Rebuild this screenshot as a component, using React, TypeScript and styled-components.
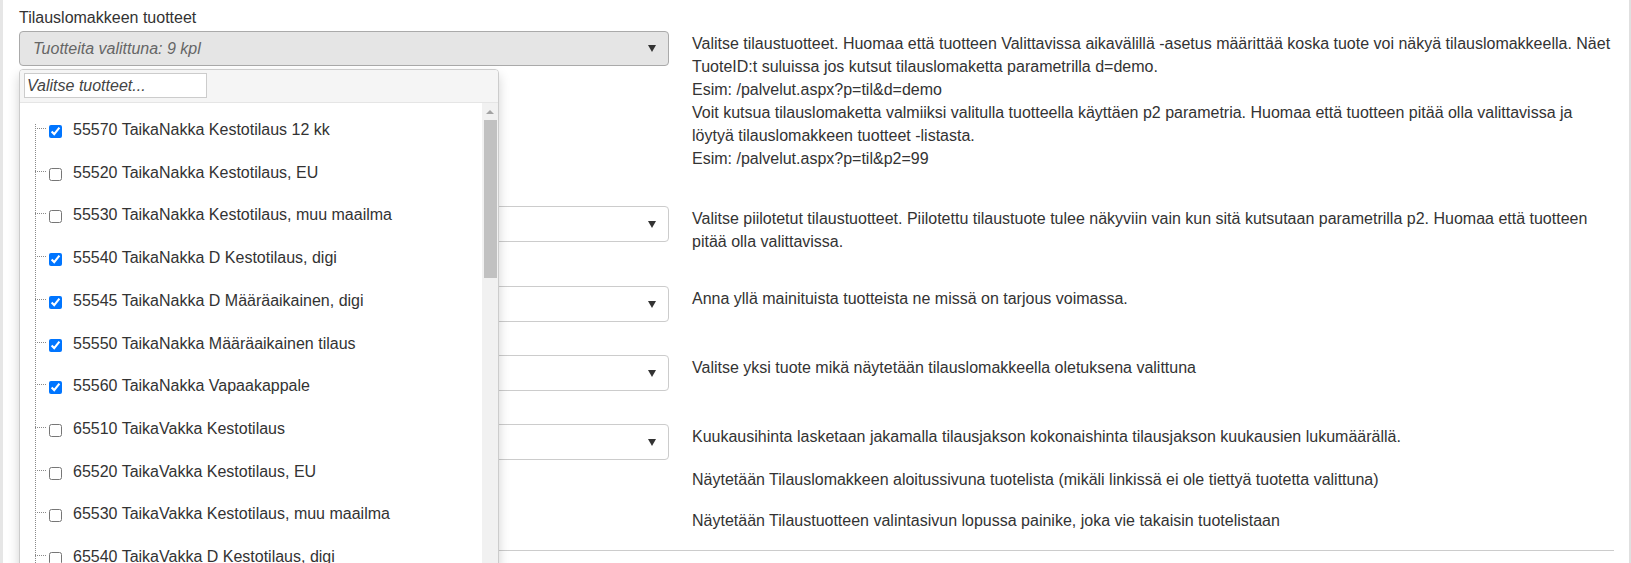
import React from 'react';
import styled, { createGlobalStyle } from 'styled-components';

const GlobalStyle = createGlobalStyle`
  html, body {
    margin: 0;
    padding: 0;
    overflow: hidden;
    background: #fff;
  }
  body {
    font-family: 'Liberation Sans', Arial, sans-serif;
    font-size: 16px;
    color: #333;
  }
  * { box-sizing: border-box; }
`;

type Product = {
  id: string;
  name: string;
  checked?: boolean;
};

const products: Product[] = [
  { id: '55570', name: 'TaikaNakka Kestotilaus 12 kk', checked: true },
  { id: '55520', name: 'TaikaNakka Kestotilaus, EU' },
  { id: '55530', name: 'TaikaNakka Kestotilaus, muu maailma' },
  { id: '55540', name: 'TaikaNakka D Kestotilaus, digi', checked: true },
  { id: '55545', name: 'TaikaNakka D Määräaikainen, digi', checked: true },
  { id: '55550', name: 'TaikaNakka Määräaikainen tilaus', checked: true },
  { id: '55560', name: 'TaikaNakka Vapaakappale', checked: true },
  { id: '65510', name: 'TaikaVakka Kestotilaus' },
  { id: '65520', name: 'TaikaVakka Kestotilaus, EU' },
  { id: '65530', name: 'TaikaVakka Kestotilaus, muu maailma' },
  { id: '65540', name: 'TaikaVakka D Kestotilaus, digi' },
];

const Page = styled.div`
  min-height: 563px;
  border-left: 3px solid #e6e6e6;
  border-right: 2px solid #e0e0e0;
  padding: 6px 15px 0 16px;
`;

const Row = styled.div<{ $space?: number }>`
  display: grid;
  grid-template-columns: 650px 1fr;
  column-gap: 23px;
  align-items: start;
  margin-bottom: ${p => p.$space ?? 8}px;
`;

const Field = styled.div`
  position: relative;
`;

const Label = styled.label`
  display: block;
  min-height: 23px;
  line-height: 23px;
  margin-bottom: 2px;
`;

const CheckLabel = styled.label`
  display: flex;
  align-items: center;
  height: 23px;
`;

const Select = styled.div<{ $open?: boolean }>`
  display: flex;
  align-items: center;
  justify-content: space-between;
  height: ${p => (p.$open ? 35 : 36)}px;
  padding: 0 12px 0 13px;
  border: 1px solid ${p => (p.$open ? '#aaa' : '#ccc')};
  border-radius: 4px;
  background: ${p => (p.$open ? '#e5e5e5' : '#fff')};
`;

const Placeholder = styled.span`
  font-style: italic;
  color: #666;
`;

const Caret = styled.span`
  width: 0;
  height: 0;
  border-left: 4px solid transparent;
  border-right: 4px solid transparent;
  border-top: 7px solid #333;
`;

const Desc = styled.div<{ $offset?: boolean }>`
  padding-top: ${p => (p.$offset ? 26 : 0)}px;
  line-height: 23px;
`;

const Divider = styled.hr`
  margin: 8px 0 0;
  border: 0;
  border-top: 1px solid #ccc;
`;

const Dropdown = styled.div`
  position: absolute;
  top: calc(100% + 3px);
  left: 0;
  width: 480px;
  height: 500px;
  z-index: 10;
  display: flex;
  flex-direction: column;
  background: #fff;
  border: 1px solid #ccc;
  border-radius: 4px 4px 0 0;
  box-shadow: 0 6px 12px rgba(0, 0, 0, 0.175);
  overflow: hidden;
`;

const DropdownHeader = styled.div`
  padding: 3px 4px 4px;
  background: #f5f5f5;
  border-bottom: 1px solid #e5e5e5;
`;

const Search = styled.input`
  display: block;
  width: 183px;
  height: 25px;
  padding: 0 2px;
  border: 1px solid #ccc;
  font-family: inherit;
  font-size: 16px;
  font-style: italic;
  color: #333;
  &::placeholder {
    color: #444;
    font-style: italic;
  }
`;

const DropdownBody = styled.div`
  flex: 1;
  display: flex;
  min-height: 0;
`;

const Tree = styled.ul`
  flex: 1;
  list-style: none;
  margin: 5px 0 0 15px;
  padding: 0;
  background: repeating-linear-gradient(to bottom, #8a8a8a 0 1px, transparent 1px 2px) 0 16px / 1px 100% no-repeat;
`;

const Item = styled.li`
  display: flex;
  align-items: center;
  height: 42.74px;
  line-height: 23px;
  white-space: nowrap;
`;

const Connector = styled.span`
  width: 11px;
  height: 0;
  margin-top: -2px;
  border-top: 1px dotted #8a8a8a;
  flex: none;
`;

const Check = styled.input`
  width: 13px;
  height: 13px;
  margin: 4px 3px 0 3px;
  flex: none;
`;

const ItemText = styled.span`
  margin-left: 8px;
`;

const ScrollTrack = styled.div`
  width: 16px;
  flex: none;
  display: flex;
  flex-direction: column;
  background: #f1f1f1;
`;

const ScrollArrow = styled.div`
  height: 17px;
  display: flex;
  align-items: center;
  justify-content: center;
  &:before {
    content: '';
    border-left: 4px solid transparent;
    border-right: 4px solid transparent;
    border-bottom: 4px solid #a3a3a3;
  }
`;

const ScrollThumb = styled.div`
  height: 158px;
  margin: 0 1px 0 2px;
  background: #c1c1c1;
`;

const ProductPicker: React.FC = () => (
  <Field>
    <Label>Tilauslomakkeen tuotteet</Label>
    <Select $open>
      <Placeholder>Tuotteita valittuna: 9 kpl</Placeholder>
      <Caret />
    </Select>
    <Dropdown>
      <DropdownHeader>
        <Search placeholder="Valitse tuotteet..." />
      </DropdownHeader>
      <DropdownBody>
        <Tree>
          {products.map(p => (
            <Item key={p.id}>
              <Connector />
              <Check type="checkbox" defaultChecked={p.checked} />
              <ItemText>{p.id} {p.name}</ItemText>
            </Item>
          ))}
        </Tree>
        <ScrollTrack>
          <ScrollArrow />
          <ScrollThumb />
        </ScrollTrack>
      </DropdownBody>
    </Dropdown>
  </Field>
);

// the labels of these fields lie under the open product list
const SelectField: React.FC = () => (
  <Field>
    <Label />
    <Select>
      <span />
      <Caret />
    </Select>
  </Field>
);

const CheckField: React.FC = () => (
  <CheckLabel>
    <input type="checkbox" />
  </CheckLabel>
);

const App: React.FC = () => {
  return (
    <>
      <GlobalStyle />
      <Page>
        <Row $space={11}>
          <ProductPicker />
          <Desc $offset>
            Valitse tilaustuotteet. Huomaa että tuotteen Valittavissa aikavälillä -asetus määrittää koska tuote voi näkyä tilauslomakkeella. Näet TuoteID:t suluissa jos kutsut tilauslomaketta parametrilla d=demo.
            <br />
            Esim: /palvelut.aspx?p=til&amp;d=demo
            <br />
            Voit kutsua tilauslomaketta valmiiksi valitulla tuotteella käyttäen p2 parametria. Huomaa että tuotteen pitää olla valittavissa ja löytyä tilauslomakkeen tuotteet -listasta.
            <br />
            Esim: /palvelut.aspx?p=til&amp;p2=99
          </Desc>
        </Row>
        <Row>
          <SelectField />
          <Desc $offset>
            Valitse piilotetut tilaustuotteet. Piilotettu tilaustuote tulee näkyviin vain kun sitä kutsutaan parametrilla p2. Huomaa että tuotteen pitää olla valittavissa.
          </Desc>
        </Row>
        <Row>
          <SelectField />
          <Desc $offset>Anna yllä mainituista tuotteista ne missä on tarjous voimassa.</Desc>
        </Row>
        <Row>
          <SelectField />
          <Desc $offset>Valitse yksi tuote mikä näytetään tilauslomakkeella oletuksena valittuna</Desc>
        </Row>
        <Row>
          <SelectField />
          <Desc $offset>Kuukausihinta lasketaan jakamalla tilausjakson kokonaishinta tilausjakson kuukausien lukumäärällä.</Desc>
        </Row>
        <Row $space={18}>
          <CheckField />
          <Desc>Näytetään Tilauslomakkeen aloitussivuna tuotelista (mikäli linkissä ei ole tiettyä tuotetta valittuna)</Desc>
        </Row>
        <Row $space={18}>
          <CheckField />
          <Desc>Näytetään Tilaustuotteen valintasivun lopussa painike, joka vie takaisin tuotelistaan</Desc>
        </Row>
        <Divider />
      </Page>
    </>
  );
};

export default App;
